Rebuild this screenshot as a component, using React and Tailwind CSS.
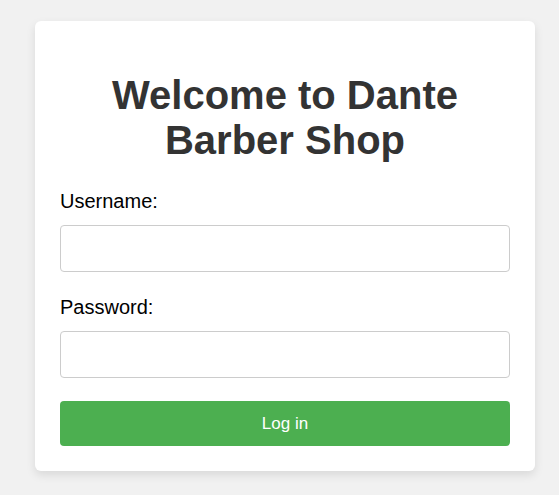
export default function App() {
  return (
    <main className="min-h-screen bg-[#f1f1f1] px-6 pt-[21px] pb-6 pl-[35px] font-['Liberation_Sans',Arial,sans-serif] text-black">
      <form className="w-full max-w-[500px] rounded-[6px] bg-white p-[25px] shadow-[0_4px_10px_rgba(0,0,0,0.1)]">
        <h1 className="mt-[27px] mb-[26px] text-center text-[40px] leading-[45px] font-bold text-[#333333]">
          Welcome to Dante Barber Shop
        </h1>
        <label htmlFor="username" className="mb-3 block text-[20px] leading-6">
          Username:
        </label>
        <input
          id="username"
          type="text"
          className="mb-[23px] block h-[47px] w-full rounded-[4px] border border-[#cccccc] bg-white px-3 text-base"
        />
        <label htmlFor="password" className="mb-3 block text-[20px] leading-6">
          Password:
        </label>
        <input
          id="password"
          type="password"
          className="mb-[23px] block h-[47px] w-full rounded-[4px] border border-[#cccccc] bg-white px-3 text-base"
        />
        <button
          type="button"
          className="block h-[45px] w-full rounded-[4px] bg-[#4caf50] text-[17px] leading-5 text-white"
        >
          Log in
        </button>
      </form>
    </main>
  );
}
